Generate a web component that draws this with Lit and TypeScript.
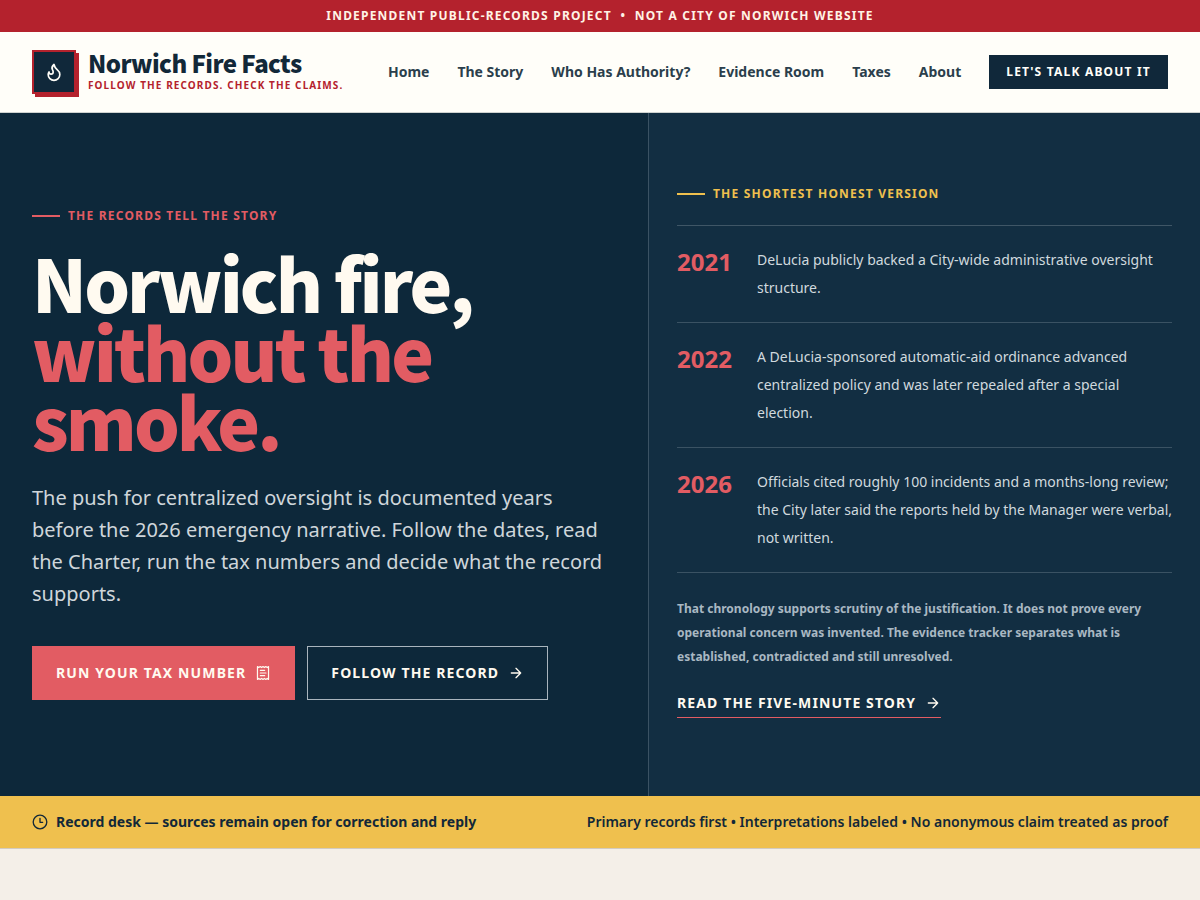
import { LitElement, html, css, svg } from "lit";
import { customElement } from "lit/decorators.js";

const flame = svg`<path d="M8.500 14.500A2.500 2.500 0 0 0 11 12c0-1.380-.5-2-1-3-1.072-2.143-.224-4.054 2-6 .5 2.500 2 4.900 4 6.500 2 1.600 3 3.500 3 5.500a7 7 0 1 1-14 0c0-1.153.433-2.294 1-3a2.500 2.500 0 0 0 2.500 2.500z" />`;
const receipt = svg`<path d="M3.700 2.300l2 1.500 2.100-1.500 2.100 1.500L12 2.300l2.100 1.500 2.100-1.500 2.100 1.500 2-1.500v19.400l-2-1.500-2.100 1.500-2.100-1.500-2.100 1.500-2.100-1.500-2.100 1.500-2.100-1.500-2 1.500z" /><path d="M8 8h6.500M8 12h8.500M8 16h6.500" />`;
const arrow = svg`<path d="M5 12h14M12 5l7 7-7 7" />`;
const clock = svg`<circle cx="12" cy="12" r="10.200" /><path d="M12 6.500V12.500h4" />`;

const icon = (shape: unknown, size: string) => html`
  <svg class="icon ${size}" viewBox="0 0 24 24" aria-hidden="true">${shape}</svg>
`;

const links = ["Home", "The Story", "Who Has Authority?", "Evidence Room", "Taxes", "About"];

const timeline = [
  { year: "2021", text: "DeLucia publicly backed a City-wide administrative oversight structure." },
  {
    year: "2022",
    text: "A DeLucia-sponsored automatic-aid ordinance advanced centralized policy and was later repealed after a special election.",
  },
  {
    year: "2026",
    text: "Officials cited roughly 100 incidents and a months-long review; the City later said the reports held by the Manager were verbal, not written.",
  },
];

@customElement("app-root")
export class AppRoot extends LitElement {
  static styles = css`
    :host {
      display: block;
      min-height: 100vh;
      background: #f4efe8;
      color: #122838;
      font-family: "Noto Sans", sans-serif;
      font-size: 14px;
    }
    * {
      box-sizing: border-box;
    }
    h1,
    p,
    ol {
      margin: 0;
      padding: 0;
    }
    a {
      color: inherit;
      text-decoration: none;
    }
    .icon {
      flex: none;
      fill: none;
      stroke: currentColor;
      stroke-width: 2;
      stroke-linecap: round;
      stroke-linejoin: round;
      width: 16px;
      height: 16px;
    }
    .icon.large {
      width: 20px;
      height: 20px;
    }
    .icon.fine {
      stroke-width: 1.8;
    }
    .notice {
      background: #b4222d;
      color: #fff3e6;
      padding: 6px 32px;
      font-size: 12px;
      line-height: 20px;
      font-weight: 700;
      letter-spacing: 0.1em;
      text-align: center;
      text-transform: uppercase;
    }
    .header {
      display: flex;
      align-items: center;
      justify-content: space-between;
      gap: 24px;
      min-height: 81px;
      padding: 0 32px;
      background: #fffef9;
      border-bottom: 1px solid #cfd3d0;
    }
    .brand {
      display: flex;
      align-items: center;
      gap: 12px;
    }
    .mark {
      display: grid;
      place-items: center;
      width: 44px;
      height: 44px;
      background: #10283a;
      border: 2px solid #b4222d;
      box-shadow: 3px 3px 0 #b4222d;
      color: #fffef9;
    }
    .name {
      display: block;
      font-family: "Noto Sans CJK SC", sans-serif;
      font-size: 24px;
      line-height: 26px;
      font-weight: 900;
      letter-spacing: -0.025em;
    }
    .tagline {
      display: block;
      color: #b4222d;
      font-size: 10px;
      line-height: 18px;
      font-weight: 700;
      letter-spacing: 0.11em;
      text-transform: uppercase;
    }
    .nav {
      display: flex;
      align-items: center;
      gap: 28px;
      color: #2b3f4c;
      line-height: 20px;
      font-weight: 700;
      white-space: nowrap;
    }
    .talk {
      padding: 7px 17px;
      background: #10283a;
      color: #fffef9;
      font-size: 12px;
      letter-spacing: 0.1em;
      text-transform: uppercase;
    }
    .hero {
      display: grid;
      grid-template-columns: 54fr 46fr;
      background: #0d283a;
      color: #fffaf0;
    }
    .lead-col {
      padding: 96px 32px;
    }
    .eyebrow {
      display: flex;
      align-items: center;
      gap: 8px;
      margin-bottom: 24px;
      color: #e25c63;
      font-size: 12px;
      line-height: 14px;
      font-weight: 700;
      letter-spacing: 0.1em;
      text-transform: uppercase;
    }
    .eyebrow::before {
      content: "";
      width: 28px;
      height: 2px;
      background: currentColor;
    }
    .eyebrow.gold {
      color: #efc04e;
    }
    .title {
      font-family: "Noto Sans CJK SC", sans-serif;
      font-size: 72px;
      line-height: 69px;
      font-weight: 900;
      letter-spacing: -0.04em;
    }
    .title em {
      display: block;
      max-width: 480px;
      color: #e25c63;
      font-style: normal;
    }
    .lead {
      margin-top: 28px;
      color: #cfd6da;
      font-size: 20px;
      line-height: 32px;
    }
    .actions {
      display: flex;
      flex-wrap: wrap;
      gap: 12px;
      margin-top: 36px;
    }
    .button {
      display: inline-flex;
      align-items: center;
      gap: 9px;
      padding: 16px 23px;
      border: 1px solid #a9b5bd;
      line-height: 20px;
      font-weight: 700;
      letter-spacing: 0.08em;
      text-transform: uppercase;
    }
    .button.solid {
      background: #e25c63;
      border-color: #e25c63;
    }
    .summary {
      padding: 74px 28px;
      background: #122e42;
      border-left: 1px solid #3a5263;
    }
    .timeline {
      list-style: none;
      border-top: 1px solid #3f5666;
    }
    .entry {
      display: grid;
      grid-template-columns: 64px 1fr;
      gap: 16px;
      padding: 20px 0;
      border-bottom: 1px solid #3a5263;
      color: #d0d9de;
      line-height: 28px;
    }
    .year {
      color: #e25c63;
      font-size: 24px;
      line-height: 32px;
      font-weight: 700;
    }
    .note {
      margin: 24px 0;
      color: #a9b8c2;
      font-size: 12px;
      line-height: 24px;
      font-weight: 700;
    }
    .story {
      display: inline-flex;
      align-items: center;
      gap: 9px;
      padding-bottom: 4px;
      border-bottom: 1px solid #e25c63;
      line-height: 20px;
      font-weight: 700;
      letter-spacing: 0.08em;
      text-transform: uppercase;
    }
    .desk {
      display: flex;
      flex-wrap: wrap;
      align-items: center;
      justify-content: space-between;
      gap: 8px 24px;
      padding: 16px 32px;
      background: #efc04e;
      border-bottom: 1px solid #d2cbc0;
      line-height: 20px;
      font-weight: 600;
    }
    .status {
      display: flex;
      align-items: center;
      gap: 8px;
      font-weight: 700;
    }
  `;

  render() {
    return html`
      <div class="notice">Independent public-records project&nbsp; •&nbsp; Not a City of Norwich website</div>
      <header class="header">
        <a class="brand" href="#home">
          <span class="mark">${icon(flame, "large")}</span>
          <span>
            <span class="name">Norwich Fire Facts</span>
            <span class="tagline">Follow the records. Check the claims.</span>
          </span>
        </a>
        <nav class="nav">
          ${links.map((label) => html`<a href="#">${label}</a>`)}
          <a class="talk" href="#talk">Let's talk about it</a>
        </nav>
      </header>
      <main>
        <section class="hero">
          <div class="lead-col">
            <p class="eyebrow">The records tell the story</p>
            <h1 class="title">Norwich fire, <em>without the smoke.</em></h1>
            <p class="lead">
              The push for centralized oversight is documented years before the 2026 emergency narrative. Follow the
              dates, read the Charter, run the tax numbers and decide what the record supports.
            </p>
            <div class="actions">
              <a class="button solid" href="#tax">Run your tax number ${icon(receipt, "fine")}</a>
              <a class="button" href="#record">Follow the record ${icon(arrow, "")}</a>
            </div>
          </div>
          <aside class="summary">
            <p class="eyebrow gold">The shortest honest version</p>
            <ol class="timeline">
              ${timeline.map(
                (item) => html`<li class="entry"><span class="year">${item.year}</span><span>${item.text}</span></li>`
              )}
            </ol>
            <p class="note">
              That chronology supports scrutiny of the justification. It does not prove every operational concern was
              invented. The evidence tracker separates what is established, contradicted and still unresolved.
            </p>
            <a class="story" href="#story">Read the five-minute story ${icon(arrow, "")}</a>
          </aside>
        </section>
        <section class="desk">
          <p class="status">${icon(clock, "")} Record desk — sources remain open for correction and reply</p>
          <p>Primary records first • Interpretations labeled • No anonymous claim treated as proof</p>
        </section>
      </main>
    `;
  }
}
